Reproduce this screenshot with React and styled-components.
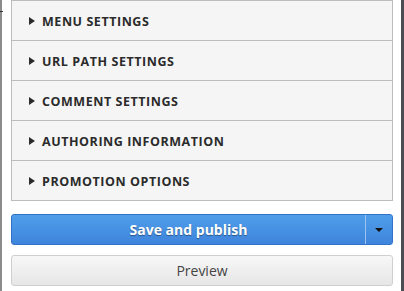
import React from "react";
import styled, { createGlobalStyle } from "styled-components";

const GlobalStyle = createGlobalStyle`
  html, body {
    margin: 0;
    padding: 0;
    background: #fff;
    font-family: "Open Sans", "Liberation Sans", sans-serif;
  }
`;

const Frame = styled.div`
  display: flex;
  width: 404px;
  height: 291px;
  overflow: hidden;
`;

const LeftRule = styled.div`
  width: 2px;
  background: #8c8c8c;
  position: relative;
  &::after {
    content: "";
    position: absolute;
    left: 0;
    top: 11px;
    width: 3px;
    height: 1px;
    background: #333;
  }
`;

const Sidebar = styled.div`
  flex: 1;
  padding: 0 8px 0 9px;
  display: flex;
  flex-direction: column;
`;

const RightRule = styled.div`
  width: 3px;
  background: #4a4d52;
`;

const Panel = styled.div`
  border: 1px solid #bdbdbd;
  background: #f5f5f5;
`;

const Row = styled.div`
  height: 39px;
  display: flex;
  align-items: center;
  padding-left: 17px;
  gap: 7px;
  border-top: ${(p) => (p.$first ? "none" : "1px solid #bdbdbd")};
  font-size: 12.5px;
  font-weight: 700;
  color: #2b2b2b;
  letter-spacing: 0.55px;
  text-transform: uppercase;
  padding-top: 1px;
  box-sizing: border-box;
  height: ${(p) => (p.$first ? "39px" : "40px")};
`;

const Arrow = styled.span`
  width: 0;
  height: 0;
  border-top: 4px solid transparent;
  border-bottom: 4px solid transparent;
  border-left: 6px solid #2b2b2b;
`;

const Actions = styled.div`
  display: flex;
  flex-direction: column;
  gap: 10px;
  margin-top: 13px;
`;

const SplitButton = styled.div`
  display: flex;
  height: 31px;
  border: 1px solid #3172c7;
  border-radius: 3px;
  background: linear-gradient(#4f9ee9, #3f84dc);
  box-sizing: border-box;
  overflow: hidden;
`;

const PrimaryButton = styled.button`
  flex: 1;
  border: none;
  background: transparent;
  color: #fff;
  font-family: inherit;
  font-size: 14px;
  font-weight: 700;
  text-shadow: 0 1px 1px rgba(0, 0, 0, 0.4);
  cursor: pointer;
  padding: 0;
`;

const Toggle = styled.button`
  width: 27px;
  border: none;
  border-left: 1px solid #9cc4f0;
  background: transparent;
  display: flex;
  align-items: center;
  justify-content: center;
  padding: 0;
  &::after {
    content: "";
    border-left: 4px solid transparent;
    border-right: 4px solid transparent;
    border-top: 4px solid #111;
  }
`;

const SecondaryButton = styled.button`
  height: 31px;
  border: 1px solid #cfcfcf;
  border-radius: 3px;
  background: linear-gradient(#f7f7f7, #e6e6e6);
  color: #444;
  font-family: inherit;
  font-size: 14px;
  padding: 0;
`;

const sections = [
  "Menu settings",
  "URL path settings",
  "Comment settings",
  "Authoring information",
  "Promotion options",
];

export default function App() {
  return (
    <>
      <GlobalStyle />
      <Frame>
        <LeftRule />
        <Sidebar>
          <Panel>
            {sections.map((s, i) => (
              <Row key={s} $first={i === 0}>
                <Arrow />
                {s}
              </Row>
            ))}
          </Panel>
          <Actions>
            <SplitButton>
              <PrimaryButton>Save and publish</PrimaryButton>
              <Toggle />
            </SplitButton>
            <SecondaryButton>Preview</SecondaryButton>
          </Actions>
        </Sidebar>
        <RightRule />
      </Frame>
    </>
  );
}
